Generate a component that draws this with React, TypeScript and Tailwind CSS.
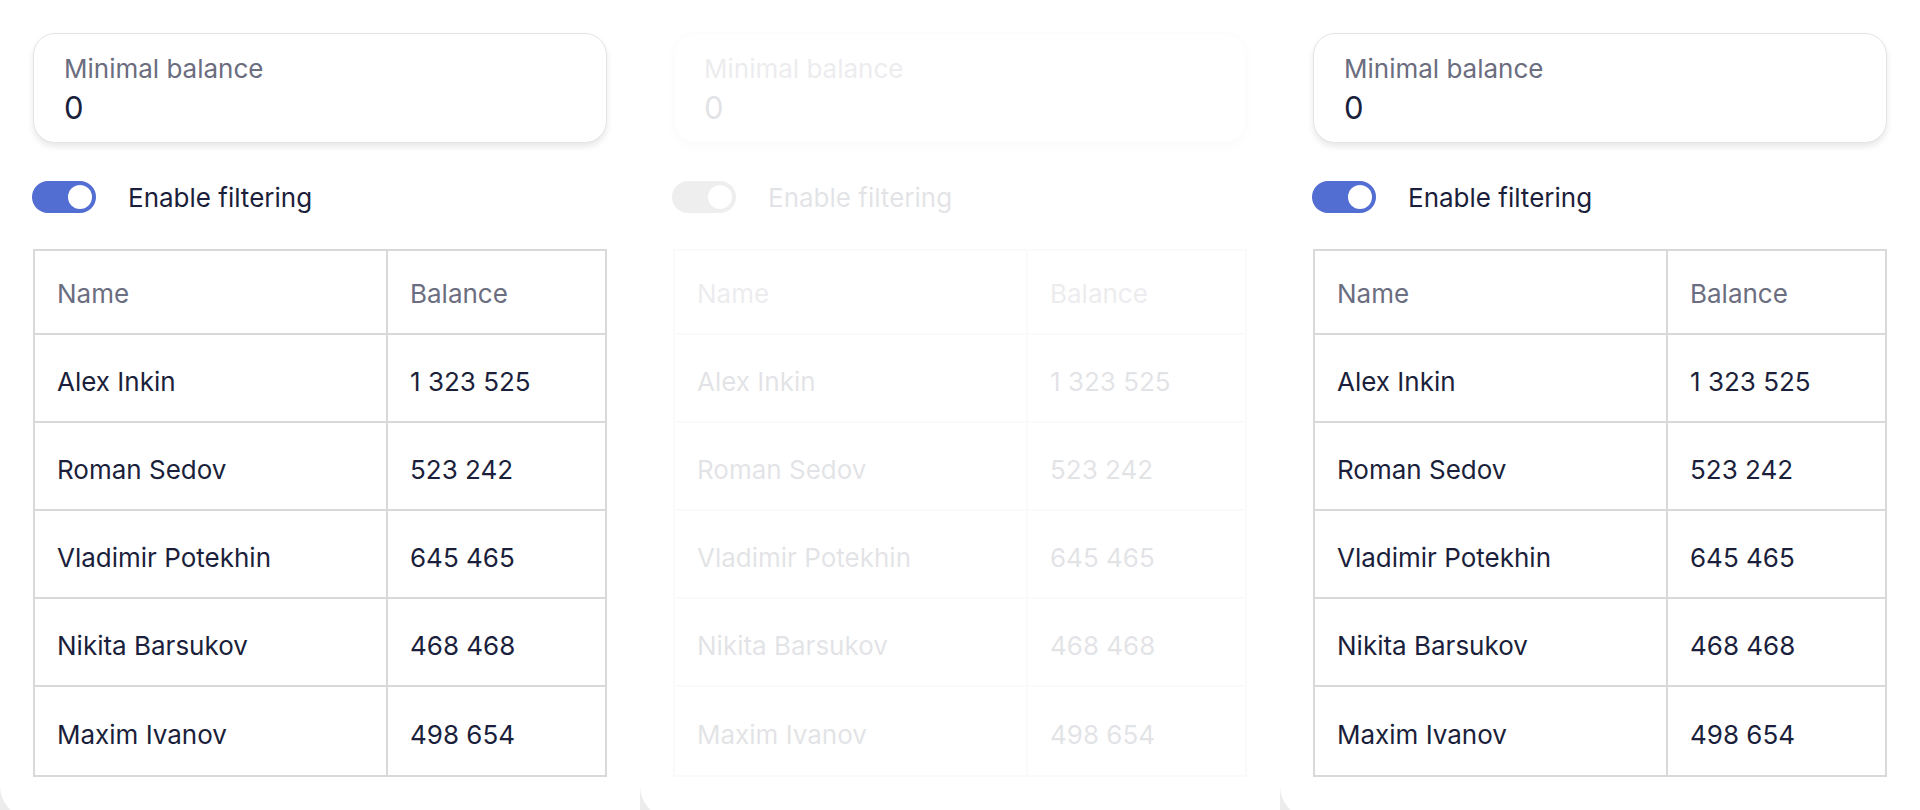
import React from 'react'

type Row = { name: string; balance: string }

const rows: Row[] = [
  { name: 'Alex Inkin', balance: '1 323 525' },
  { name: 'Roman Sedov', balance: '523 242' },
  { name: 'Vladimir Potekhin', balance: '645 465' },
  { name: 'Nikita Barsukov', balance: '468 468' },
  { name: 'Maxim Ivanov', balance: '498 654' },
]

const Toggle = ({ disabled }: { disabled?: boolean }) => (
  <div
    className={
      'w-[64px] h-[32px] rounded-full flex items-center justify-end pr-[4px] ' +
      (disabled ? 'bg-[#7c7c7c]' : 'bg-[#526ed3]')
    }
  >
    <div className="w-[24px] h-[24px] rounded-full bg-white" />
  </div>
)

const Panel = ({ disabled }: { disabled?: boolean }) => (
  <div className="w-[640px] h-[818px] shrink-0 bg-white rounded-bl-[32px] px-[33px] pt-[33px]">
    <div className={disabled ? 'opacity-[0.12]' : ''}>
      {/* input */}
      <div className="h-[110px] rounded-[22px] border border-[#e4e4e4] bg-white shadow-[0_4px_6px_rgba(0,0,0,0.09)] pl-[30px] pt-[19px]">
        <div className="text-[26px] leading-[32px] text-[#6b6d80]">Minimal balance</div>
        <div className="text-[31px] leading-[40px] text-[#1b1f3b] mt-[3px]">0</div>
      </div>

      {/* toggle */}
      <div className="flex items-center mt-[37px] -ml-[1px]">
        <Toggle disabled={disabled} />
        <span className="ml-[32px] pt-[2px] text-[26px] leading-[32px] text-[#1b1f3b]">Enable filtering</span>
      </div>

      {/* table */}
      <div className="mt-[35px] border-2 border-[#d9d9d9]">
        <div className="grid grid-cols-[353px_1fr] h-[84px] border-b-2 border-[#d9d9d9] text-[26px] text-[#6b6d80]">
          <div className="border-r-2 border-[#d9d9d9] flex items-center pl-[22px] pt-[2px]">Name</div>
          <div className="flex items-center pl-[22px] pt-[2px]">Balance</div>
        </div>
        {rows.map((r, i) => (
          <div
            key={i}
            className={
              'grid grid-cols-[353px_1fr] h-[88px] text-[26px] text-[#1b1f3b] ' +
              (i < rows.length - 1 ? 'border-b-2 border-[#d9d9d9]' : '')
            }
          >
            <div className="border-r-2 border-[#d9d9d9] flex items-center pl-[22px] pt-[6px]">{r.name}</div>
            <div className="flex items-center pl-[22px] pt-[6px]">{r.balance}</div>
          </div>
        ))}
      </div>
    </div>
  </div>
)

export default function App() {
  return (
    <div
      className="w-[1920px] h-[810px] overflow-hidden bg-[#ececec] flex"
      style={{ fontFamily: 'Inter, "Noto Sans", sans-serif' }}
    >
      <Panel />
      <Panel disabled />
      <Panel />
    </div>
  )
}
